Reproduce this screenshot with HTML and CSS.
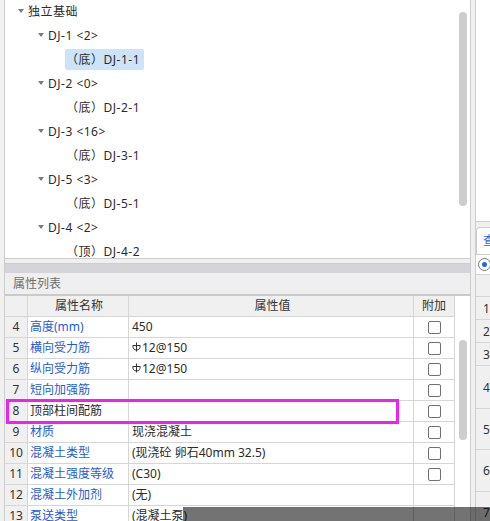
FILE: index.html
```html
<!DOCTYPE html>
<html lang="zh">
<head>
<meta charset="utf-8">
<title>属性列表</title>
<link rel="stylesheet" href="styles.css">
</head>
<body>
<div class="app">
  <div class="left">
    <div class="tree-panel">
      <div class="tree">
        <div class="node lv0"><span class="caret"></span><span class="label">独立基础</span></div>
        <div class="node lv1"><span class="caret"></span><span class="label">DJ-1 &lt;2&gt;</span></div>
        <div class="node lv2"><span class="label selected">（底）DJ-1-1</span></div>
        <div class="node lv1"><span class="caret"></span><span class="label">DJ-2 &lt;0&gt;</span></div>
        <div class="node lv2"><span class="label">（底）DJ-2-1</span></div>
        <div class="node lv1"><span class="caret"></span><span class="label">DJ-3 &lt;16&gt;</span></div>
        <div class="node lv2"><span class="label">（底）DJ-3-1</span></div>
        <div class="node lv1"><span class="caret"></span><span class="label">DJ-5 &lt;3&gt;</span></div>
        <div class="node lv2"><span class="label">（底）DJ-5-1</span></div>
        <div class="node lv1"><span class="caret"></span><span class="label">DJ-4 &lt;2&gt;</span></div>
        <div class="node lv2"><span class="label">（顶）DJ-4-2</span></div>
      </div>
      <div class="track track-tree"><div class="thumb"></div></div>
    </div>
    <div class="prop-panel">
      <div class="prop-topbar"></div>
      <div class="prop-title">属性列表</div>
      <div class="prop-body">
        <div class="grid">
          <div class="row head">
            <div class="c num"></div>
            <div class="c name">属性名称</div>
            <div class="c val">属性值</div>
            <div class="c add">附加</div>
          </div>
          <div class="row">
            <div class="c num">4</div>
            <div class="c name link">高度(mm)</div>
            <div class="c val">450</div>
            <div class="c add"><span class="chk"></span></div>
          </div>
          <div class="row">
            <div class="c num">5</div>
            <div class="c name link">横向受力筋</div>
            <div class="c val"><svg class="rebar" width="9" height="10" viewBox="0 0 9 10"><path d="M4.5 0.5V9.5M0.8 3.5H8.2M0.8 3.5Q0.8 8 4.5 8Q8.2 8 8.2 3.5" fill="none" stroke="#333" stroke-width="1"/></svg>12@150</div>
            <div class="c add"><span class="chk"></span></div>
          </div>
          <div class="row">
            <div class="c num">6</div>
            <div class="c name link">纵向受力筋</div>
            <div class="c val"><svg class="rebar" width="9" height="10" viewBox="0 0 9 10"><path d="M4.5 0.5V9.5M0.8 3.5H8.2M0.8 3.5Q0.8 8 4.5 8Q8.2 8 8.2 3.5" fill="none" stroke="#333" stroke-width="1"/></svg>12@150</div>
            <div class="c add"><span class="chk"></span></div>
          </div>
          <div class="row">
            <div class="c num">7</div>
            <div class="c name link">短向加强筋</div>
            <div class="c val"></div>
            <div class="c add"><span class="chk"></span></div>
          </div>
          <div class="row">
            <div class="c num">8</div>
            <div class="c name">顶部柱间配筋</div>
            <div class="c val"></div>
            <div class="c add"><span class="chk"></span></div>
          </div>
          <div class="row">
            <div class="c num">9</div>
            <div class="c name link">材质</div>
            <div class="c val">现浇混凝土</div>
            <div class="c add"><span class="chk"></span></div>
          </div>
          <div class="row">
            <div class="c num">10</div>
            <div class="c name link">混凝土类型</div>
            <div class="c val">(现浇砼 卵石40mm 32.5)</div>
            <div class="c add"><span class="chk"></span></div>
          </div>
          <div class="row">
            <div class="c num">11</div>
            <div class="c name link">混凝土强度等级</div>
            <div class="c val">(C30)</div>
            <div class="c add"><span class="chk"></span></div>
          </div>
          <div class="row">
            <div class="c num">12</div>
            <div class="c name link">混凝土外加剂</div>
            <div class="c val">(无)</div>
            <div class="c add"></div>
          </div>
          <div class="row">
            <div class="c num">13</div>
            <div class="c name link">泵送类型</div>
            <div class="c val">(混凝土泵)</div>
            <div class="c add"></div>
          </div>
        </div>
        <div class="track track-table"><div class="thumb"></div></div>
      </div>
    </div>
  </div>
  <div class="right">
    <div class="right-top"></div>
    <div class="right-bottom">
      <div class="tabs"><div class="tab">查看</div></div>
      <div class="radio-row"><span class="radio"><span class="dot"></span></span></div>
      <div class="rrow rhead"><div class="rnum"></div><div class="rcell"></div></div>
      <div class="rrow h23"><div class="rnum">1</div><div class="rcell"></div></div>
      <div class="rrow h23"><div class="rnum">2</div><div class="rcell"></div></div>
      <div class="rrow h23"><div class="rnum">3</div><div class="rcell"></div></div>
      <div class="rrow h43"><div class="rnum">4</div><div class="rcell"></div></div>
      <div class="rrow h41"><div class="rnum">5</div><div class="rcell"></div></div>
      <div class="rrow h42"><div class="rnum">6</div><div class="rcell"></div></div>
      <div class="rrow h42"><div class="rnum">7</div><div class="rcell"></div></div>
    </div>
  </div>
  <div class="mark"></div>
  <div class="dim"></div>
</div>
</body>
</html>
```

FILE: styles.css
```css
* { box-sizing: border-box; }
html, body {
  margin: 0;
  padding: 0;
}
body {
  width: 490px;
  height: 521px;
  overflow: hidden;
  background: #f0f0f0;
  font-family: "Noto Sans", "Noto Sans CJK SC", sans-serif;
  font-size: 12px;
  color: #2b2b2b;
}
.app {
  position: relative;
  display: flex;
  height: 521px;
  padding-left: 4px;
  overflow: hidden;
}
.left {
  flex: 0 0 467px;
  display: flex;
  flex-direction: column;
  border-left: 1px solid #cdcdcd;
  border-right: 1px solid #cdcdcd;
  min-height: 0;
}
/* tree */
.tree-panel {
  flex: 0 0 259px;
  display: flex;
  background: #fff;
  border-bottom: 1px solid #cdcdcd;
  overflow: hidden;
}
.tree {
  flex: 1;
  margin-top: -1px;
}
.node {
  height: 24px;
  display: flex;
  align-items: center;
}
.lv0 { padding-left: 13px; }
.lv1 { padding-left: 33px; }
.lv2 { padding-left: 60px; }
.caret {
  flex: 0 0 10px;
  height: 4px;
  position: relative;
}
.caret::before {
  content: "";
  position: absolute;
  left: 0;
  top: 0;
  border-left: 3.5px solid transparent;
  border-right: 3.5px solid transparent;
  border-top: 4px solid #7a7a7a;
}
.label {
  display: inline-block;
  height: 21px;
  line-height: 21px;
  white-space: pre;
  letter-spacing: 0.5px;
}
.lv2 .label { padding: 0 4px 0 1px; border-radius: 2px; }
.label.selected { background: #cce3f8; }
.track {
  flex: 0 0 15px;
  padding-left: 4px;
  background: #fff;
}
.thumb {
  width: 8px;
  background: #cdcdcd;
  border-radius: 4px;
}
.track-tree .thumb { margin-top: 12px; height: 194px; }
.track-table .thumb { margin-top: 44px; height: 100px; }
/* properties */
.prop-panel {
  margin-top: 4px;
  flex: 1 1 auto;
  min-height: 0;
  display: flex;
  flex-direction: column;
  border-top: 1px solid #cdcdcd;
  background: #fff;
  overflow: hidden;
}
.prop-topbar {
  flex: 0 0 9px;
  background: #d5d5d9;
}
.prop-title {
  flex: 0 0 23px;
  line-height: 21px;
  padding-left: 8px;
  background: #efefef;
  border-bottom: 2px solid #cacaca;
  color: #6e6e6e;
}
.prop-body {
  display: flex;
  flex: 1 1 auto;
  min-height: 0;
  overflow: hidden;
}
.grid {
  flex: 0 0 450px;
}
.row {
  display: grid;
  grid-template-columns: 23px 101px 285px 41px;
  height: 21px;
}
.c {
  border-right: 1px solid #d6d6d6;
  border-bottom: 1px solid #d6d6d6;
  line-height: 20px;
  white-space: nowrap;
  overflow: hidden;
}
.head .c { background: #f0f0f0; text-align: center; color: #333; }
.num { background: #f0f0f0; text-align: center; color: #333; }
.name { padding-left: 2px; }
.val { padding-left: 3px; }
.link { color: #1f5bd6; }
.add {
  display: flex;
  align-items: center;
  justify-content: center;
}
.chk {
  width: 13px;
  height: 13px;
  border: 1px solid #707070;
  border-radius: 2px;
  background: #fff;
}
.rebar { vertical-align: 0px; margin-right: 1px; }
/* right */
.right {
  flex: 0 0 200px;
  margin-left: 4px;
  border-left: 1px solid #cdcdcd;
  display: flex;
  flex-direction: column;
  min-height: 0;
  overflow: hidden;
}
.right-top {
  flex: 0 0 222px;
  background: #fff;
  border-bottom: 1px solid #cdcdcd;
}
.right-bottom {
  margin-top: 5px;
  flex: 1 1 auto;
  min-height: 0;
  overflow: hidden;
}
.tabs {
  height: 28px;
  display: flex;
  align-items: flex-end;
  border-bottom: 1px solid #cdcdcd;
}
.tab {
  height: 27px;
  line-height: 26px;
  padding: 0 40px 0 6px;
  background: #fff;
  color: #2a66dc;
  border: 1px solid #cdcdcd;
  border-bottom: none;
  border-radius: 4px 4px 0 0;
}
.radio-row {
  height: 20px;
  background: #fff;
  border-bottom: 1px solid #d6d6d6;
  display: flex;
  align-items: center;
  padding-left: 2px;
}
.radio {
  width: 13px;
  height: 13px;
  border: 1px solid #7a7a7a;
  border-radius: 50%;
  display: flex;
  align-items: center;
  justify-content: center;
  background: #fff;
}
.dot {
  width: 5px;
  height: 5px;
  border-radius: 50%;
  background: #1a6fe0;
}
.rrow {
  display: grid;
  grid-template-columns: 22px 1fr;
  border-bottom: 1px solid #d6d6d6;
}
.rhead { height: 22px; background: #f0f0f0; }
.h23 { height: 23px; }
.h41 { height: 41px; }
.h42 { height: 42px; }
.h43 { height: 43px; }
.rnum {
  background: #f0f0f0;
  border-right: 1px solid #d6d6d6;
  display: flex;
  align-items: center;
  justify-content: center;
  color: #333;
}
.rcell { background: #fff; }
.rhead .rcell { background: #f0f0f0; }
/* overlays */
.mark {
  position: absolute;
  left: 6px;
  top: 399px;
  width: 393px;
  height: 25px;
  border: 3px solid #ee22ee;
}
.dim {
  position: absolute;
  left: 183px;
  top: 507px;
  right: 0;
  bottom: 0;
  background: rgba(0, 0, 0, 0.55);
}
```
